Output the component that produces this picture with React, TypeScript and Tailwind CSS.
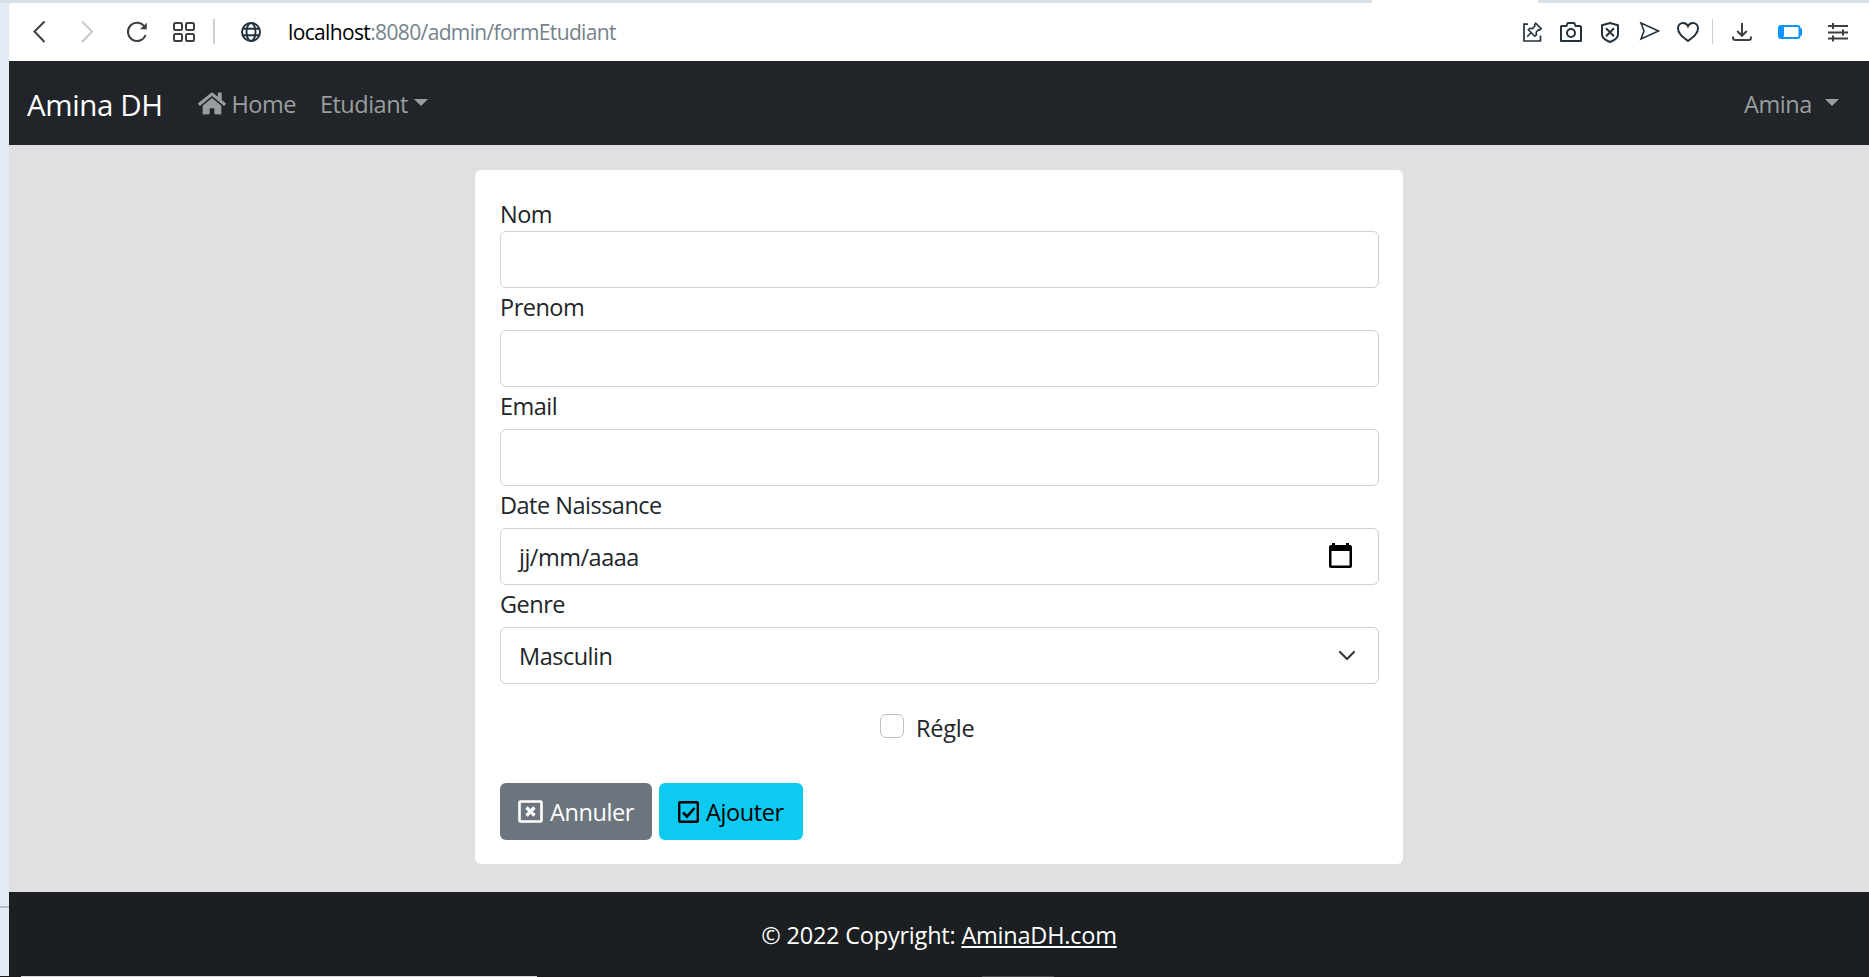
import React from "react";
import { FaHome } from "react-icons/fa";

function Caret({ className = "" }: { className?: string }) {
  return (
    <svg className={className} width="14" height="7" viewBox="0 0 14 7" fill="currentColor">
      <path d="M0 0h14L7 7z" />
    </svg>
  );
}

function Icon({ children, w, h, className = "" }: { children: React.ReactNode; w: number; h: number; className?: string }) {
  return (
    <svg
      className={"shrink-0 " + className}
      width={w}
      height={h}
      viewBox={`0 0 ${w} ${h}`}
      fill="none"
      stroke="currentColor"
      strokeWidth="2"
    >
      {children}
    </svg>
  );
}

function Toolbar() {
  return (
    <div className="flex h-[58px] shrink-0 items-start bg-white pt-[16px] text-[#3d4042]">
      <Icon w={14} h={24} className="ml-[23px] mt-px">
        <path d="M12.500 1.500 2.500 11.500l10 10.500" />
      </Icon>
      <Icon w={14} h={24} className="ml-[34px] mt-px text-[#c8c8c8]">
        <path d="M2 1.500 12 11.500 2 22" />
      </Icon>
      <Icon w={22} h={22} className="ml-[32px] mt-[2px]">
        <path d="M18.6 5.8A9.1 9.1 0 1 0 19.6 14" />
        <path d="M20.8 1.8v6.4h-6.8z" fill="currentColor" stroke="none" />
      </Icon>
      <Icon w={24} h={22} className="ml-[24px] mt-[2px]">
        <rect x="2" y="2" width="8" height="7" rx="1.5" />
        <rect x="14" y="2" width="8" height="7" rx="1.5" />
        <rect x="2" y="13" width="8" height="7" rx="1.5" />
        <rect x="14" y="13" width="8" height="7" rx="1.5" />
      </Icon>
      <div className="ml-[17px] h-[25px] w-[2px] bg-[#cfcfcf]" />
      <Icon w={22} h={22} className="ml-[25px] mt-[2px] text-[#26323b]">
        <circle cx="11" cy="11" r="9" />
        <ellipse cx="11" cy="11" rx="4.5" ry="9" />
        <path d="M3 7.7h16M3 14.3h16" />
      </Icon>
      <div className="ml-[26px] mt-[-1px] whitespace-nowrap text-[21px] leading-[28px] tracking-[-0.64px] text-[#75828e]">
        <span className="text-black">localhost</span>:8080/admin/formEtudiant
      </div>
      <div className="ml-auto mr-[20px] flex items-start text-[#26323b]">
        <Icon w={22} h={22} className="mt-[2px]">
          <path d="M7 3.2H3V20h16.5v-5.5" strokeWidth="1.7" />
          <path d="m14.8 2.2 5.4 5.4-1.4 1.2-1.2-.2-2.4 2.6.2 2.6-1.6 1.4-6.4-6.4 1.5-1.5 2.5.3 2.5-2.5-.3-1.5zM10.5 11.2l-4.3 4.5" strokeWidth="1.6" />
        </Icon>
        <Icon w={24} h={22} className="ml-[16px] mt-[2px]">
          <path d="M2 5.5 3 5h4.5l1.2-3h6.6l1.2 3H21l1 .8V20H2z" strokeLinejoin="round" />
          <circle cx="12" cy="12" r="4" />
        </Icon>
        <Icon w={20} h={24} className="ml-[17px] mt-[2px]">
          <path d="M10 2 18 4.3v9.2c0 3.6-4 6-8 7.5-4-1.500-8-3.900-8-7.500V4.300z" strokeLinejoin="round" />
          <path d="m6 7.2 8 8M14 7.2l-8 8" />
        </Icon>
        <Icon w={22} h={20} className="ml-[19px] mt-[2px]">
          <path d="M2 2 19.5 10 2 18l3-8z" strokeWidth="1.6" />
        </Icon>
        <Icon w={24} h={22} className="ml-[15px] mt-[2px]">
          <path d="M12 20C6 15.5 2 12.5 2 7.6 2 4.2 4.4 2 7.1 2 9.4 2 11.2 3.4 12 5.2 12.8 3.4 14.6 2 16.9 2 19.6 2 22 4.2 22 7.6c0 4.9-4 7.9-10 12.4z" />
        </Icon>
        <div className="ml-[12px] h-[25px] w-px bg-[#cfcfcf]" />
        <Icon w={22} h={20} className="ml-[18px] mt-[3px] text-[#3d4042]">
          <path d="M11 1v12.5M6.2 9 11 13.8 15.8 9M2 14.5v1.2c0 1.6.9 2.3 2.5 2.3h13c1.6 0 2.5-.7 2.5-2.3v-1.2" />
        </Icon>
        <Icon w={26} h={16} className="ml-[24px] mt-[5px] text-[#0a95ff]">
          <rect x="2" y="2" width="20.5" height="12" rx="2" />
          <path d="M3 2h4v9.5l-1 2H3zM23 4.5h2v7h-2z" fill="currentColor" stroke="none" />
        </Icon>
        <Icon w={22} h={20} className="ml-[24px] mt-[3px] text-[#3d4042]">
          <path d="M1 4h20M1 10.5h20M1 16.5h20M6 1v6M16 7.5v6M6 13.5v6" />
        </Icon>
      </div>
    </div>
  );
}

function Navbar() {
  return (
    <nav className="flex h-[84px] shrink-0 items-center bg-[#212529] pl-[18px] pr-[30px] text-[23.5px] text-[#9b9d9e]">
      <span className="whitespace-nowrap pt-[3px] text-[29.5px] leading-[44px] tracking-[-0.4px] text-white">Amina DH</span>
      <FaHome className="ml-[35px] h-[27px] w-[28px] shrink-0" />
      <span className="ml-[6px] pt-[4px] tracking-[-0.5px]">Home</span>
      <span className="ml-[24px] pt-[4px] tracking-[-0.5px]">Etudiant</span>
      <Caret className="ml-[6px] mb-[2px]" />
      <span className="ml-auto pt-[4px] tracking-[-0.4px]">Amina</span>
      <Caret className="ml-[13px] mb-[2px]" />
    </nav>
  );
}

function Field({ label, gap = true, children }: { label: string; gap?: boolean; children?: React.ReactNode }) {
  return (
    <div>
      <div className={gap ? "h-[42px] leading-[36px] pt-px" : "h-[37px] leading-[36px] pt-[2px]"}>{label}</div>
      <div className="flex h-[57px] items-center rounded-[6px] border border-[#ced0da] bg-white pl-[18px]">{children}</div>
    </div>
  );
}

function FormCard() {
  return (
    <div className="mx-auto mt-[25px] h-[694px] w-[928px] rounded-[6px] bg-white pl-[25px] pr-[24px] pt-[24px] text-[23.5px] tracking-[-0.5px] text-[#212529]">
      <Field label="Nom" gap={false} />
      <Field label="Prenom" />
      <Field label="Email" />
      <Field label="Date Naissance">
        <span className="pt-[2px]">jj/mm/aaaa</span>
        <svg className="mb-[2px] ml-auto mr-[26px]" width="23" height="26" viewBox="0 0 23 26">
          <path d="M3 0h3v3H3zM17 0h3v3h-3z" fill="#000" />
          <path d="M2 2h19a2 2 0 0 1 2 2v19a2 2 0 0 1-2 2H2a2 2 0 0 1-2-2V4a2 2 0 0 1 2-2zM2.5 8v14.5h18V8z" fill="#000" fillRule="evenodd" />
        </svg>
      </Field>
      <Field label="Genre">
        <span className="pt-[2px]">Masculin</span>
        <svg className="ml-auto mr-[22px]" width="18" height="12" viewBox="0 0 18 12" fill="none" stroke="#343a40" strokeWidth="2.2" strokeLinecap="round" strokeLinejoin="round">
          <path d="m2 2 7 7 7-7" />
        </svg>
      </Field>
      <div className="mt-[26px] flex h-[36px] items-center pl-[380px]">
        <span className="mb-[4px] h-[24px] w-[24px] rounded-[6px] border border-[#bfbfbf] bg-white" />
        <span className="ml-[12px] pt-px tracking-[-0.2px]">Régle</span>
      </div>
      <div className="mt-[37px] flex gap-[7px]">
        <button className="flex h-[57px] w-[152px] items-center rounded-[6px] bg-[#6c757d] pl-[18px] tracking-[-0.4px] text-white">
          <Icon w={25} h={23}>
            <rect x="1.5" y="1.5" width="22" height="20" rx="1" strokeWidth="2.6" />
            <path d="m8.500 7.500 8 8M16.500 7.500l-8 8" strokeWidth="3.2" />
          </Icon>
          <span className="ml-[7px] pt-[3px]">Annuler</span>
        </button>
        <button className="flex h-[57px] w-[144px] items-center rounded-[6px] bg-[#0dcaf0] pl-[19px] tracking-[-0.4px] text-black">
          <Icon w={21} h={22}>
            <rect x="1.200" y="1.200" width="18.600" height="19.600" rx="1" strokeWidth="2.4" />
            <path d="m5 11.500 4 4 7.500-8.500" strokeWidth="2.6" />
          </Icon>
          <span className="ml-[7px] pt-[3px]">Ajouter</span>
        </button>
      </div>
    </div>
  );
}

export default function App() {
  return (
    <div className="flex h-[977px] w-[1869px] flex-col overflow-hidden bg-[#e2ebf3] font-['Open_Sans','Noto_Sans',sans-serif]">
      <div className="flex h-[3px] shrink-0 bg-[#d9e0e6]">
        <div className="ml-[1372px] h-[3px] w-[166px] bg-white" />
      </div>
      <div className="flex h-[973px] shrink-0">
        <div className="w-[9px] shrink-0 pt-[903px]">
          <div className="h-[2px] bg-[#b0bcc8]" />
        </div>
        <div className="flex min-w-0 grow flex-col overflow-hidden rounded-tl-[3px] bg-[#e0e0e2]">
          <Toolbar />
          <Navbar />
          <main className="h-[747px] shrink-0 overflow-hidden">
            <FormCard />
          </main>
          <footer className="flex h-[84px] shrink-0 items-center justify-center bg-[#1b1f22] pt-[4px] text-[23.5px] tracking-[-0.21px] text-white">
            <span className="whitespace-pre">© 2022 Copyright: </span>
            <a className="underline decoration-2 underline-offset-[2px]">AminaDH.com</a>
          </footer>
        </div>
      </div>
      <div className="flex h-px shrink-0 bg-[#1c1c1c]">
        <div className="ml-[21px] w-[516px] bg-[#d8d8d8]" />
        <div className="ml-[445px] w-[72px] bg-[#4a4a4a]" />
      </div>
    </div>
  );
}
